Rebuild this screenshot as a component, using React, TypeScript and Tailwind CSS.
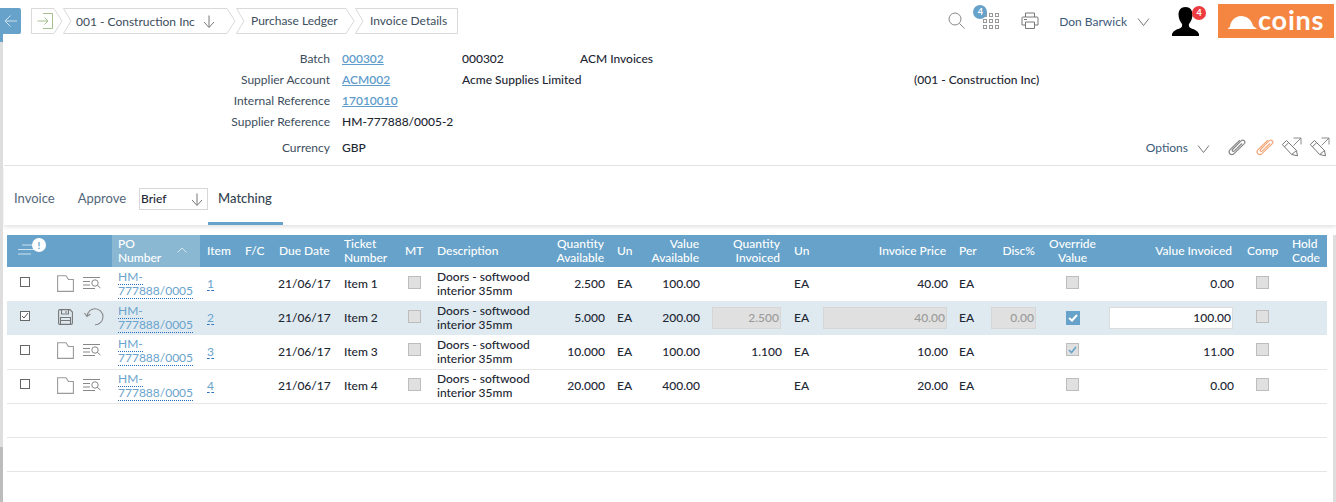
import React from "react";

const Crumb = ({ w, first, last, pl, children }: { w: number; first?: boolean; last?: boolean; pl: number; children?: React.ReactNode }) => {
  const h = 26;
  const d = last
    ? `M.5 .5 H${w - 0.5} V${h - 0.5} H.5 L8 13 Z`
    : first
    ? `M.5 .5 H${w - 9} L${w - 1} 13 L${w - 9} ${h - 0.5} H.5 Z`
    : `M.5 .5 H${w - 9} L${w - 1} 13 L${w - 9} ${h - 0.5} H.5 L8 13 Z`;
  return (
    <div className="relative h-[26px] flex items-center shrink-0" style={{ width: w, paddingLeft: pl }}>
      <svg className="absolute left-0 top-0" width={w} height={h} fill="none">
        <path d={d} stroke="#d9d9d9" />
      </svg>
      <div className="relative flex items-center text-[12px] text-[#3c4d5c] whitespace-nowrap">{children}</div>
    </div>
  );
};

const ArrowDown = ({ c = "#777" }: { c?: string }) => (
  <svg width="12" height="13" viewBox="0 0 12 13" fill="none" stroke={c}>
    <path d="M6 0.5V12M1 7l5 5.5L11 7" />
  </svg>
);
const Chevron = () => (
  <svg width="13" height="8" viewBox="0 0 13 8" fill="none" stroke="#777">
    <path d="M1 .5l5.5 7L12 .5" />
  </svg>
);
const Clip = ({ c }: { c: string }) => (
  <svg width="18" height="17" viewBox="0 0 19 18" fill="none" stroke={c} strokeWidth="1.300">
    <path d="M12.500 1.200 2.200 11.200c-1.600 1.700-1 3.500-.2 4.400.9.900 2.700 1.400 4.300-.1L17 5.200c1.300-1.400.8-2.700.1-3.400-.8-.7-2-1-3.300.2L5 10.800c-.8.8-.5 1.500-.1 1.900.4.400 1.100.6 1.900-.1l8-7.800" />
  </svg>
);
const PencilOut = () => (
  <svg width="21" height="20" viewBox="0 0 21 20" fill="none" stroke="#777">
    <path d="M1.300 7.500 5.500 3.500 15.500 13.500 16.500 18.800 10.700 17.500Z" />
    <path d="M3.500 9.700 7.700 5.700M10.700 17.500 15.500 13.500" />
    <path d="M12.500 8.500 20 1M12.500 1H20V7.500" stroke="#8a8a8a" />
  </svg>
);
const Folder = () => (
  <svg width="17" height="17" viewBox="0 0 17 17" fill="none" stroke="#9a9a9a" strokeWidth="1.100" className="shrink-0">
    <path d="M.6 16.400V.8h8.400l2.500 3.700H16.400V16.400Z" />
  </svg>
);
const ListSearch = () => (
  <svg width="18" height="13" viewBox="0 0 18 13" fill="none" stroke="#888" className="shrink-0">
    <path d="M0 .5h17M0 4.500h7M0 8h7M0 11.500h12" />
    <circle cx="12" cy="6" r="3.200" fill="#fff" />
    <path d="M14.300 8.300 17.500 11" />
  </svg>
);
const Save = () => (
  <svg width="15" height="16" viewBox="0 0 15 16" fill="none" stroke="#777" strokeWidth="1.100" className="shrink-0">
    <path d="M1.500.6h10.500L14.400 3V14a1.400 1.400 0 0 1-1.400 1.400H2A1.400 1.400 0 0 1 .6 14V1.500Z" />
    <path d="M3.500.6v4.400h7V.6M8 2v2M2.500 15.400V8.500h10v6.900M2.500 11.500h10" />
  </svg>
);
const Undo = () => (
  <svg width="20" height="18" viewBox="0 0 20 18" fill="none" stroke="#888" strokeWidth="1.100" className="shrink-0">
    <path d="M3 8C4 4 7 .8 11 .8a8 8 0 1 1 0 16M.5 5 3 8.500l3.500-2.500" />
  </svg>
);

const Box = ({ on }: { on?: boolean }) => (
  <span className="w-[10px] h-[10px] border border-[#666] bg-white flex items-center justify-center shrink-0">
    {on && (
      <svg width="8" height="8" viewBox="0 0 8 8" fill="none" stroke="#555">
        <path d="M1 4l2 2 4-5" />
      </svg>
    )}
  </span>
);
const Gray = () => <span className="block w-[13px] h-[13px] bg-[#e0e0e0] border border-[#bdbdbd]" />;

const Input = ({ v }: { v: string }) => (
  <div className="h-[22px] bg-[#e0e0e0] border border-[#d6d6d6] text-[#9a9a9a] text-right leading-[20px] pr-[1px]">{v}</div>
);
const N = ({ v }: { v: string }) => <span className="inline-block -mr-[1px]">{v}</span>;

const rows = [
  { n: "1", qa: "2.500", va: "100.00", qi: "", ip: "40.00", vi: "0.00", ov: 0 },
  { n: "2", qa: "5.000", va: "200.00", qi: "2.500", ip: "40.00", vi: "100.00", ov: 2, sel: true },
  { n: "3", qa: "10.000", va: "100.00", qi: "1.100", ip: "10.00", vi: "11.00", ov: 1 },
  { n: "4", qa: "20.000", va: "400.00", qi: "", ip: "20.00", vi: "0.00", ov: 0 },
];
const widths = [41, 64, 88, 40, 34, 65, 61, 33, 117, 59, 36, 60, 81, 32, 134, 33, 56, 62, 136, 46, 42];

const Row = ({ r }: { r: (typeof rows)[number] }) => (
  <tr className={`h-[34px] font-medium ${r.sel ? "bg-[#dfeaf0]" : ""} ${r.n === "1" || r.n === "2" ? "" : "border-b border-[#e6e6e6]"}`}>
    <td className="pl-[13px] align-middle"><div className="-mt-[4px]"><Box on={r.sel} /></div></td>
    <td className="align-middle pl-[9px]">
      {r.sel ? (
        <div className="flex items-center gap-[11px] -mt-[2px] pl-[1px]"><Save /><Undo /></div>
      ) : (
        <div className="flex items-center gap-[9px] -mt-[2px]"><Folder /><ListSearch /></div>
      )}
    </td>
    <td className="pl-[6px] align-middle text-[12px] leading-[14px] text-[#6aa3cd] font-normal">
      <div className="w-[78px] -mt-[1px]">
        <div><span className="border-b border-dotted border-[#2a6fc0]">HM-</span></div>
        <div><span className="border-b border-dotted border-[#2a6fc0]">777888/0005</span></div>
      </div>
    </td>
    <td className="pl-[7px] align-middle text-[12px] text-[#6aa3cd] font-normal"><span className="border-b border-dashed border-[#2a6fc0] leading-[13px] inline-block">{r.n}</span></td>
    <td />
    <td className="pl-[4px] align-middle">21/06/17</td>
    <td className="pl-[5px] align-middle">Item {r.n}</td>
    <td className="pl-[8px] align-middle"><div className="-mt-[4px]"><Gray /></div></td>
    <td className="pl-[4px] align-middle leading-[14px]">Doors - softwood<br />interior 35mm</td>
    <td className="text-right pr-[5px] align-middle"><N v={r.qa} /></td>
    <td className="pl-[8px] align-middle">EA</td>
    <td className="text-right pr-[6px] align-middle"><N v={r.va} /></td>
    <td className="text-right pl-[7px] pr-[5px] align-middle">{r.sel ? <Input v={r.qi} /> : <N v={r.qi} />}</td>
    <td className="pl-[8px] align-middle">EA</td>
    <td className="text-right pl-[5px] pr-[5px] align-middle">{r.sel ? <Input v={r.ip} /> : <N v={r.ip} />}</td>
    <td className="pl-[7px] align-middle">EA</td>
    <td className="text-right pl-[6px] pr-[5px] align-middle">{r.sel ? <Input v="0.00" /> : ""}</td>
    <td className="pl-[25px] align-middle">
      {r.ov === 2 ? (
        <span className="flex w-[14px] h-[14px] bg-[#66a2c9] items-center justify-center">
          <svg width="10" height="8" viewBox="0 0 10 8" fill="none" stroke="#fff" strokeWidth="2"><path d="M1 4l3 2.500L9 1" /></svg>
        </span>
      ) : r.ov === 1 ? (
        <span className="flex w-[13px] h-[13px] -mt-[4px] bg-[#e0e0e0] border border-[#bdbdbd] items-center justify-center">
          <svg width="9" height="8" viewBox="0 0 9 8" fill="none" stroke="#66a2c9" strokeWidth="1.600"><path d="M1 4l2.500 2.500L8 1" /></svg>
        </span>
      ) : (
        <div className="-mt-[4px]"><Gray /></div>
      )}
    </td>
    <td className="text-right pl-[6px] pr-[6px] align-middle">
      {r.sel ? (
        <div className="h-[22px] bg-white border border-[#dcdcdc] leading-[20px] pr-[1px] text-right">{r.vi}</div>
      ) : (
        <N v={r.vi} />
      )}
    </td>
    <td className="pl-[17px] align-middle"><div className="-mt-[4px]"><Gray /></div></td>
    <td />
  </tr>
);

const Meta = ({ label, children, className = "h-[21px]" }: { label: string; children?: React.ReactNode; className?: string }) => (
  <div className={`flex items-center ${className}`}>
    <div className="w-[326px] text-right text-[#3c4d5c] shrink-0">{label}</div>
    {children}
  </div>
);
const L = ({ children }: { children: React.ReactNode }) => (
  <span className="underline text-[#5f9ccb] font-semibold">{children}</span>
);

const Th = ({ children, className = "" }: { children?: React.ReactNode; className?: string }) => (
  <th className={`font-medium align-middle leading-[14px] ${className}`}>{children}</th>
);

export default function App() {
  return (
    <div className="relative w-[1336px] h-[502px] overflow-hidden bg-white text-[12px] text-[#1d2733]" style={{ fontFamily: "Lato, sans-serif" }}>
      {/* page scrollbars and back tab */}
      <div className="absolute left-0 top-[42px] w-[3px] h-[405px] bg-[#dedede]" />
      <div className="absolute left-0 top-[447px] w-[3px] h-[55px] bg-[#bcbcbc]" />
      <div className="absolute left-0 top-[34px] w-[3px] h-[8px] bg-[#66a2c9]" />
      <div className="absolute left-0 top-[8px] w-[21px] h-[26px] bg-[#66a2c9] rounded-r-[2px] flex items-center justify-center">
        <svg width="13" height="12" viewBox="0 0 13 12" fill="none" stroke="#cfe2ee"><path d="M13 6H1M6.500.5 1 6l5.500 5.500" /></svg>
      </div>
      <div className="absolute right-0 top-[235px] w-[3px] h-[267px] bg-[#dedede]" />

      {/* top bar */}
      <div className="h-[42px] pl-[31px] pr-[2px] flex items-start">
        <div className="flex mt-[8px]">
          <Crumb w={32} first pl={6}>
            <svg width="16" height="16" viewBox="0 0 16 16" fill="none" className="-mt-[1px]">
              <path d="M6 .5h9.500v15H6" stroke="#a5bf8e" />
              <path d="M.500 8H11M7.500 4.500 11 8l-3.500 3.500" stroke="#a5bf8e" />
            </svg>
          </Crumb>
          <Crumb w={173} pl={13}>
            <span className="mt-[1px]">001 - Construction Inc</span>
            <span className="ml-[8px]"><ArrowDown /></span>
          </Crumb>
          <Crumb w={119} pl={15}><span className="-mt-[1px]">Purchase Ledger</span></Crumb>
          <Crumb w={103} last pl={15}><span className="-mt-[1px]">Invoice Details</span></Crumb>
        </div>
        <div className="ml-auto flex items-start">
          <svg width="17" height="17" viewBox="0 0 17 17" fill="none" stroke="#888" className="mt-[12px]">
            <circle cx="7" cy="7" r="6" /><path d="M11.500 11.500 16.500 16.500" />
          </svg>
          <div className="relative ml-[18px] mt-[13px] grid grid-cols-3 gap-[2px] w-[16px]">
            {Array.from({ length: 9 }).map((_, i) => (
              <span key={i} className="w-[4px] h-[4px] border border-[#999]" />
            ))}
            <span className="absolute -left-[10px] -top-[8px] w-[14px] h-[14px] rounded-full bg-[#66a2c9] text-white text-[9px] font-bold leading-[14px] text-center">4</span>
          </div>
          <svg width="18" height="17" viewBox="0 0 18 17" fill="none" stroke="#777" className="ml-[22px] mt-[12px]">
            <path d="M4.500 5V1h9v4M4.500 13H1V6a1 1 0 0 1 1-1h14a1 1 0 0 1 1 1v7h-3.500" />
            <path d="M4.500 10h9v6.500h-9ZM3 7.500h3" />
          </svg>
          <span className="ml-[20px] mt-[13px] text-[#3c5a78]">Don Barwick</span>
          <span className="ml-[10px] mt-[18px]"><Chevron /></span>
          <div className="relative ml-[22px] mt-[7px] w-[27px] h-[29px]">
            <svg width="27" height="29" viewBox="0 0 27 29" fill="#000">
              <path d="M13.500 0c4.500 0 7 3 7 7.500 0 4-1.500 7-3.500 9.500-.5 1.500 0 3 1.500 4 2.500 1.200 7 2 8.500 6v2H0v-2c1.500-4 6-4.800 8.500-6 1.500-1 2-2.500 1.500-4-2-2.500-3.500-5.500-3.500-9.500C6.500 3 9 0 13.500 0Z" />
            </svg>
            <span className="absolute left-[20px] -top-[1px] w-[14px] h-[14px] rounded-full bg-[#ee3b3f] text-white text-[9px] font-bold leading-[14px] text-center">4</span>
          </div>
          <div className="ml-[19px] mt-[4px] w-[116px] h-[34px] bg-[#f58642] flex items-center pl-[10px]">
            <svg width="29" height="13" viewBox="0 0 29 13" fill="#fff" className="mt-[3px]">
              <path d="M0 13c0-1 .6-1.500 1.800-1.800C2.500 5 7 0 13 0c6 0 10.500 4 12 9.500.3 1 2 1.500 4 3.500Z" />
            </svg>
            <span className="ml-[1px] text-white text-[27px] font-bold leading-[34px] tracking-[0.8px] -mt-[3px]">coins</span>
          </div>
        </div>
      </div>

      {/* header fields */}
      <div className="ml-[4px] h-[124px] border-b border-[#e6e6e6] pt-[6px]">
        <Meta label="Batch">
          <span className="ml-[12px] w-[120px]"><L>000302</L></span>
          <span className="w-[118px] font-medium">000302</span>
          <span className="font-medium">ACM Invoices</span>
        </Meta>
        <Meta label="Supplier Account">
          <span className="ml-[12px] w-[120px]"><L>ACM002</L></span>
          <span className="w-[452px] font-medium">Acme Supplies Limited</span>
          <span className="font-medium">(001 - Construction Inc)</span>
        </Meta>
        <Meta label="Internal Reference">
          <span className="ml-[12px]"><L>17010010</L></span>
        </Meta>
        <Meta label="Supplier Reference">
          <span className="ml-[12px] font-medium">HM-777888/0005-2</span>
        </Meta>
        <Meta label="Currency" className="h-[21px] mt-[5px]">
          <span className="ml-[12px] font-medium">GBP</span>
          <div className="ml-auto flex items-center pr-[6px]">
            <span className="text-[#3c5a78]">Options</span>
            <span className="ml-[9px] mt-[2px]"><Chevron /></span>
            <span className="ml-[18px]"><Clip c="#888888" /></span>
            <span className="ml-[10px]"><Clip c="#f3a87b" /></span>
            <span className="ml-[7px] -mt-[2px]"><PencilOut /></span>
            <span className="ml-[7px] -mt-[2px]"><PencilOut /></span>
          </div>
        </Meta>
      </div>

      {/* tabs */}
      <div className="ml-[4px] h-[59px] shadow-[0_2px_4px_rgba(0,0,0,0.12)] flex items-start text-[13px]">
        <span className="ml-[10px] mt-[23px] text-[#52677a]">Invoice</span>
        <span className="ml-[23px] mt-[23px] text-[#52677a]">Approve</span>
        <div className="ml-[13px] mt-[22px] w-[69px] h-[22px] border border-[#d6d6d6] flex items-center justify-between pl-[1px] pr-[4px] text-[12px] font-medium text-[#1d2733]">
          <span>Brief</span>
          <ArrowDown />
        </div>
        <div className="h-[59px] w-[75px] border-b-[3px] border-[#66a2c9] pl-[10px] pt-[23px] text-[#33424f] font-medium">Matching</div>
      </div>

      {/* grid */}
      <div className="ml-[7px] mt-[10px] w-[1320px]">
        <table className="table-fixed border-collapse w-[1320px]">
          <colgroup>
            {widths.map((w, i) => (
              <col key={i} style={{ width: w }} />
            ))}
          </colgroup>
          <thead>
            <tr className="h-[32px] bg-[#66a2c9] text-white text-left">
              <Th className="relative">
                <svg width="18" height="11" viewBox="0 0 18 11" fill="none" stroke="#cfe2ee" className="absolute left-[10px] top-[9px]">
                  <path d="M5 1h13M1 5.500h17M1 10h13" />
                </svg>
                <span className="absolute left-[25px] top-[3px] w-[14px] h-[14px] rounded-full bg-white text-[#66a2c9] text-[10px] font-bold leading-[14px] text-center">!</span>
              </Th>
              <Th />
              <Th className="bg-[#8ab8d3] pl-[6px] relative">
                PO<br />Number
                <svg width="10" height="6" viewBox="0 0 10 6" fill="none" stroke="#d5e5ef" className="absolute right-[13px] top-[12px]"><path d="M.5 5.500 5 1l4.500 4.500" /></svg>
              </Th>
              <Th className="pl-[7px]">Item</Th>
              <Th className="pl-[5px]">F/C</Th>
              <Th className="pl-[5px]">Due Date</Th>
              <Th className="pl-[5px]">Ticket<br />Number</Th>
              <Th className="pl-[5px]">MT</Th>
              <Th className="pl-[4px]">Description</Th>
              <Th className="text-right pr-[5px]">Quantity<br />Available</Th>
              <Th className="pl-[8px]">Un</Th>
              <Th className="text-right pr-[6px]">Value<br />Available</Th>
              <Th className="text-right pr-[6px]">Quantity<br />Invoiced</Th>
              <Th className="pl-[8px]">Un</Th>
              <Th className="text-right pr-[6px]">Invoice Price</Th>
              <Th className="pl-[7px]">Per</Th>
              <Th className="text-right pr-[6px]">Disc%</Th>
              <Th className="text-center pl-[1px]">Override<br />Value</Th>
              <Th className="text-right pr-[7px]">Value Invoiced</Th>
              <Th className="pl-[8px]">Comp</Th>
              <Th className="pl-[7px]">Hold<br />Code</Th>
            </tr>
          </thead>
          <tbody>
            {rows.map((r) => (
              <Row key={r.n} r={r} />
            ))}
            <tr className="h-[34px] border-b border-[#e6e6e6]"><td colSpan={21} /></tr>
            <tr className="h-[34px] border-b border-[#e6e6e6]"><td colSpan={21} /></tr>
          </tbody>
        </table>
      </div>
    </div>
  );
}
